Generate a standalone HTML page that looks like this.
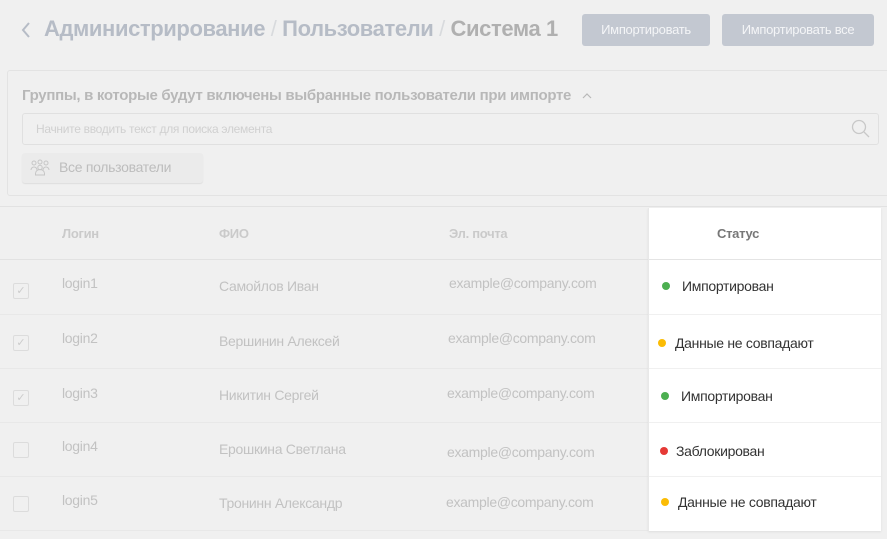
<!DOCTYPE html>
<html><head><meta charset="utf-8"><style>
*{margin:0;padding:0;box-sizing:border-box}
body{width:887px;height:539px;background:#f0f0f0;font-family:"Liberation Sans",sans-serif;position:relative;overflow:hidden;color:#bbb}
.a{position:absolute;white-space:nowrap}
.btn{position:absolute;top:14px;height:32px;background:#c3c8d1;color:#f4f5f7;font-size:13px;border-radius:3px;text-align:center;line-height:32px;letter-spacing:-0.3px}
.hl{position:absolute;left:0;width:648px;height:1px;background:#e8e8e8}
.cb{position:absolute;left:13px;width:16px;height:16px;border:1px solid #dcdcdc;border-radius:2px;color:#ccc;font-size:11px;line-height:14px;text-align:center}
.t{font-size:14px;color:#c2c2c2;letter-spacing:-0.3px}
.st{position:absolute;left:648px;width:233px;background:#fff;border-left:1px solid #e8e8e8}
.s{font-size:14px;color:#333;letter-spacing:-0.3px}
.d{display:inline-block;width:8px;height:8px;border-radius:50%;margin-right:12px;vertical-align:1px}
</style></head><body>
<svg class="a" style="left:20px;top:22px" width="12" height="16" viewBox="0 0 12 16" fill="none" stroke="#b6bcc6" stroke-width="2"><path d="M9 1L3 8l6 7"/></svg>
<div class="a" style="left:44px;top:16px;font-size:22px;font-weight:bold;color:#b6bcc6;letter-spacing:-0.4px">Администрирование <span style="color:#d8dadd;font-weight:normal">/</span> Пользователи <span style="color:#d8dadd;font-weight:normal">/</span> <span style="color:#b0b0b0">Система 1</span></div>
<div class="btn" style="left:582px;width:128px">Импортировать</div>
<div class="btn" style="left:722px;width:152px">Импортировать все</div>
<div style="position:absolute;left:7px;top:70px;width:890px;height:126px;border:1px solid #e3e3e3;border-radius:3px"></div>
<div class="a" style="left:22px;top:87px;font-size:15px;font-weight:bold;color:#b8b8b8;letter-spacing:-0.3px">Группы, в которые будут включены выбранные пользователи при импорте</div>
<svg class="a" style="left:581px;top:92px" width="12" height="8" viewBox="0 0 12 8" fill="none" stroke="#b8b8b8" stroke-width="1.2"><path d="M2 6l4-4 4 4"/></svg>
<div style="position:absolute;left:22px;top:113px;width:857px;height:32px;border:1px solid #e0e0e0;border-radius:3px"></div>
<div class="a" style="left:36px;top:122px;font-size:12px;color:#d0d0d0;letter-spacing:-0.3px">Начните вводить текст для поиска элемента</div>
<svg class="a" style="left:851px;top:119px" width="20" height="20" viewBox="0 0 20 20" fill="none" stroke="#c8c8c8" stroke-width="1.3"><circle cx="8" cy="8" r="6.5"/><path d="M13 13l5 5"/></svg>
<div style="position:absolute;left:22px;top:153px;width:181px;height:30px;background:#ebebeb;border-radius:3px;box-shadow:0 1px 1px #ddd"></div>
<svg class="a" style="left:30px;top:159px" width="20" height="17" viewBox="0 0 20 17" fill="none" stroke="#c6c6c6" stroke-width="1"><circle cx="4" cy="4" r="2"/><circle cx="10" cy="3" r="2"/><circle cx="16" cy="4" r="2"/><path d="M1 11a3 3 0 016 0M13 11a3 3 0 016 0"/><circle cx="10" cy="8.5" r="2.2"/><path d="M5.5 16v-1.5a4.5 4 0 019 0V16z"/></svg>
<div class="a t" style="left:59px;top:159px;color:#bdbdbd">Все пользователи</div>
<div class="hl" style="top:206px;width:887px;background:#e2e2e2"></div>
<div class="hl" style="top:259px;background:#e2e2e2"></div><div class="hl" style="top:314px"></div><div class="hl" style="top:368px"></div><div class="hl" style="top:422px"></div><div class="hl" style="top:476px"></div><div class="hl" style="top:530px"></div>
<div class="a t" style="left:62px;top:226px;font-size:13px;font-weight:bold;color:#cacaca">Логин</div>
<div class="a t" style="left:219px;top:226px;font-size:13px;font-weight:bold;color:#cacaca">ФИО</div>
<div class="a t" style="left:449px;top:226px;font-size:13px;font-weight:bold;color:#cacaca">Эл. почта</div>
<div class="cb" style="top:283px">✓</div><div class="a t" style="left:62px;top:275px">login1</div><div class="a t" style="left:219px;top:278px">Самойлов Иван</div><div class="a t" style="left:449px;top:275px">example@company.com</div>
<div class="cb" style="top:335px">✓</div><div class="a t" style="left:62px;top:330px">login2</div><div class="a t" style="left:219px;top:333px">Вершинин Алексей</div><div class="a t" style="left:448px;top:330px">example@company.com</div>
<div class="cb" style="top:390px">✓</div><div class="a t" style="left:62px;top:385px">login3</div><div class="a t" style="left:219px;top:387px">Никитин Сергей</div><div class="a t" style="left:447px;top:385px">example@company.com</div>
<div class="cb" style="top:442px"></div><div class="a t" style="left:62px;top:438px">login4</div><div class="a t" style="left:219px;top:441px">Ерошкина Светлана</div><div class="a t" style="left:447px;top:444px">example@company.com</div>
<div class="cb" style="top:496px"></div><div class="a t" style="left:62px;top:492px">login5</div><div class="a t" style="left:219px;top:495px">Тронинн Александр</div><div class="a t" style="left:446px;top:494px">example@company.com</div>
<div class="st" style="top:208px;height:323px;box-shadow:0 1px 2px #ddd"></div>
<div class="a" style="left:649px;top:259px;width:232px;height:1px;background:#e4e4e4"></div>
<div class="a" style="left:649px;top:314px;width:232px;height:1px;background:#f0f0f0"></div>
<div class="a" style="left:649px;top:368px;width:232px;height:1px;background:#f0f0f0"></div>
<div class="a" style="left:649px;top:422px;width:232px;height:1px;background:#f0f0f0"></div>
<div class="a" style="left:649px;top:476px;width:232px;height:1px;background:#f0f0f0"></div>
<div class="a s" style="left:717px;top:226px;font-size:13px;font-weight:bold;color:#777">Статус</div>
<div class="a s" style="left:662px;top:278px"><span class="d" style="background:#4caf50"></span>Импортирован</div>
<div class="a s" style="left:658px;top:335px"><span class="d" style="background:#fbbc05;margin-right:9px"></span>Данные не совпадают</div>
<div class="a s" style="left:661px;top:388px"><span class="d" style="background:#4caf50"></span>Импортирован</div>
<div class="a s" style="left:660px;top:443px"><span class="d" style="background:#e53935;margin-right:8px"></span>Заблокирован</div>
<div class="a s" style="left:661px;top:494px"><span class="d" style="background:#fbbc05;margin-right:9px"></span>Данные не совпадают</div>
</body></html>
